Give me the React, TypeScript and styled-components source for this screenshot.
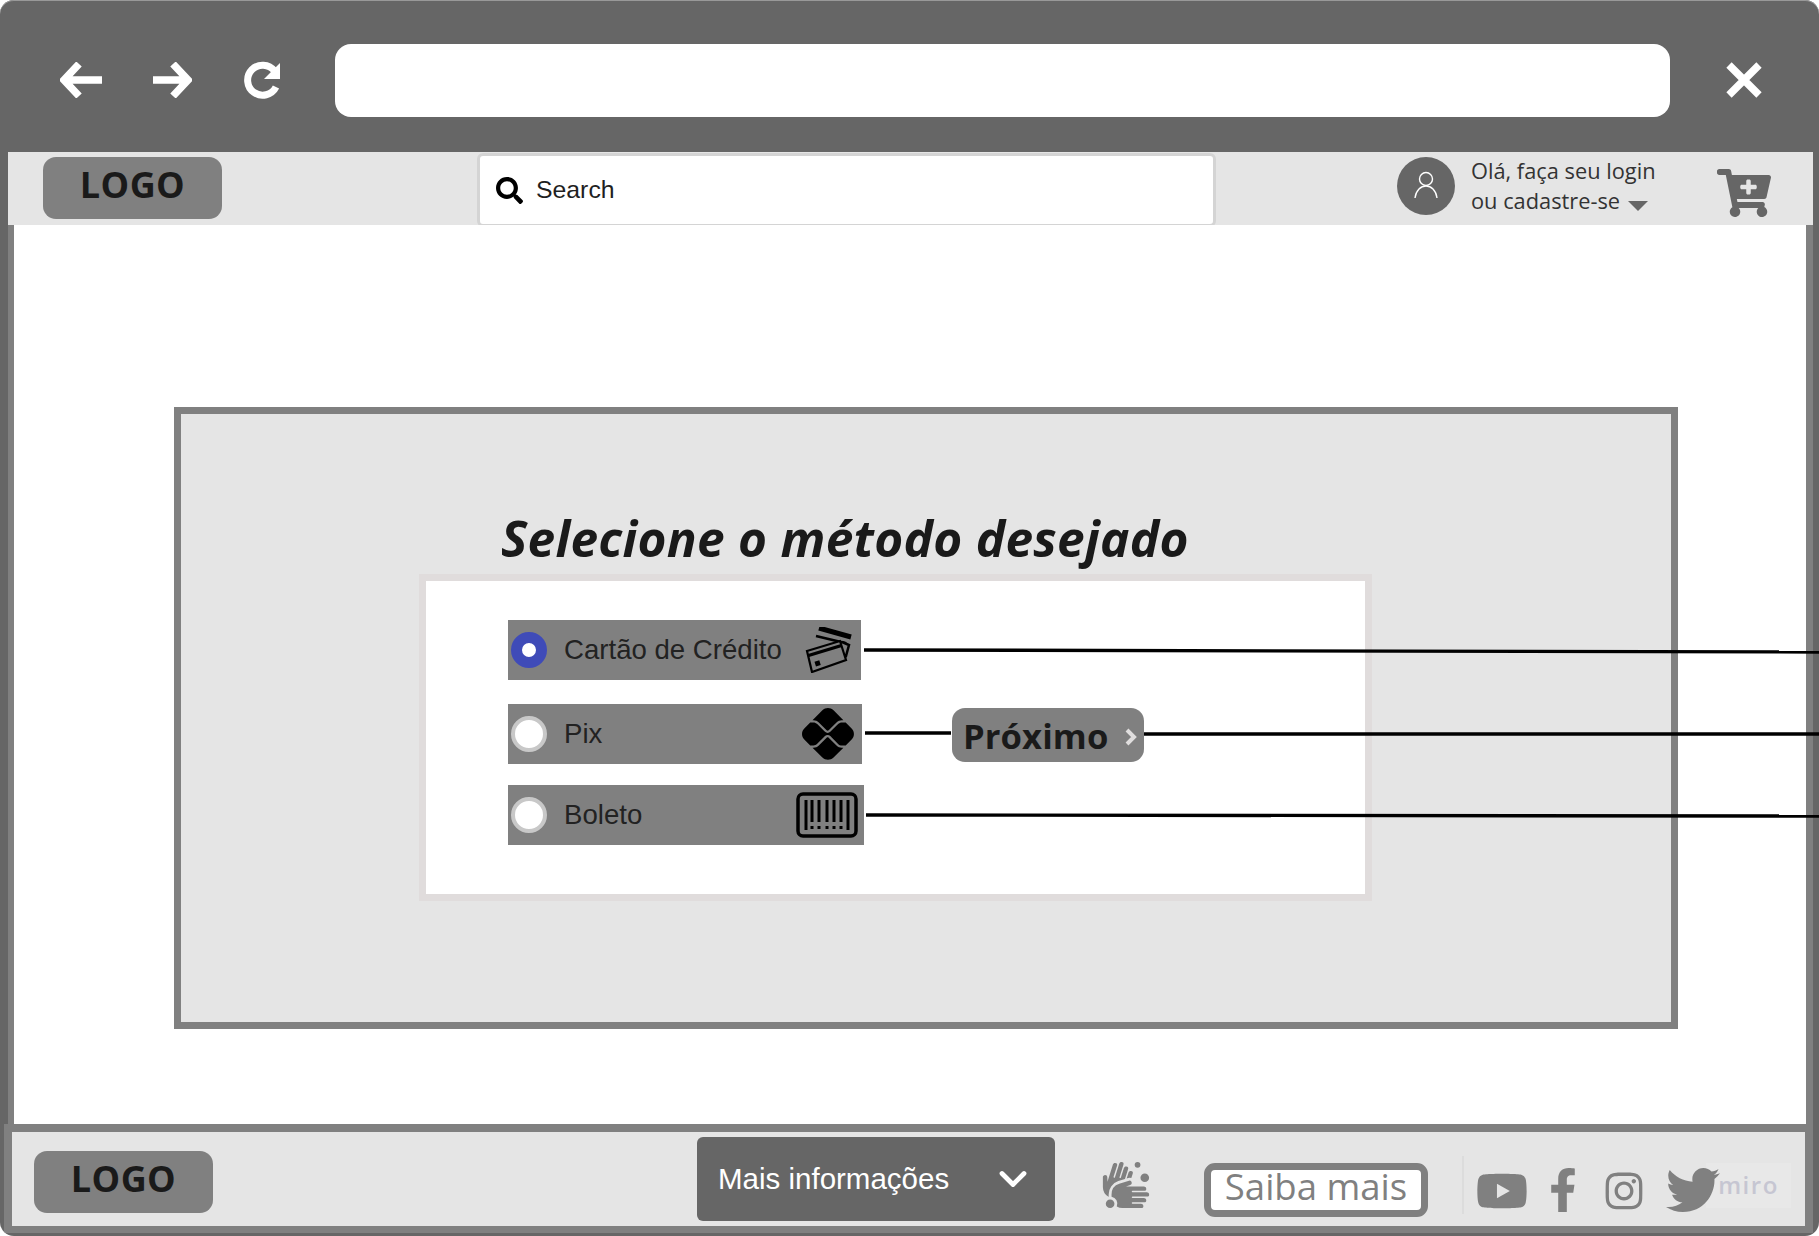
import type { FC, ReactNode } from "react";
import styled, { createGlobalStyle } from "styled-components";
import {
  FaCartPlus,
  FaFacebookF,
  FaHandsWash,
  FaInstagram,
  FaSearch,
  FaTwitter,
  FaYoutube,
} from "react-icons/fa";
import { FaPix } from "react-icons/fa6";
import { FiChevronDown } from "react-icons/fi";

const GlobalStyle = createGlobalStyle`
  html, body {
    margin: 0;
    padding: 0;
    background: #fff;
  }
  * {
    box-sizing: border-box;
  }
`;

const Window = styled.div`
  position: relative;
  width: 1819px;
  height: 1236px;
  display: flex;
  flex-direction: column;
  overflow: hidden;
  background: #666;
  border-radius: 14px;
  box-shadow: inset 0 1px 0 #999;
  font-family: "Open Sans", "Liberation Sans", sans-serif;
`;

const TopBar = styled.div`
  flex: none;
  height: 152px;
  display: flex;
  align-items: center;
  padding: 8px 59px 0 60px;
`;

const NavIcon = styled.svg<{ $gap: number }>`
  flex: none;
  margin-right: ${(p) => p.$gap}px;
  fill: none;
  stroke: #fff;
`;

const AddressBar = styled.div`
  flex: none;
  width: 1335px;
  height: 73px;
  margin: 0 56px 0 0;
  background: #fff;
  border-radius: 16px;
`;

const Inner = styled.div`
  flex: 1;
  min-height: 0;
  display: flex;
  flex-direction: column;
  margin: 0 6px 3px 4px;
`;

const Header = styled.header`
  flex: none;
  height: 73px;
  margin-left: 4px;
  display: flex;
  align-items: flex-start;
  background: #e5e5e5;
  padding: 5px 0 0 35px;
`;

const Logo = styled.div<{ $lift: number; $top?: number }>`
  flex: none;
  width: 179px;
  height: 62px;
  margin-top: ${(p) => p.$top ?? 0}px;
  display: flex;
  align-items: center;
  justify-content: center;
  background: #808080;
  border-radius: 13px;
  color: #1a1a1a;
  font-size: 36px;
  font-weight: 700;
  letter-spacing: 0.4px;
  padding-bottom: ${(p) => p.$lift}px;
`;

const SearchBox = styled.div`
  flex: none;
  width: 739px;
  height: 74px;
  margin: -4px 181px 0 255px;
  display: flex;
  align-items: center;
  gap: 13px;
  padding: 0 0 0 16px;
  background: #fff;
  border: 3px solid #d4d4d4;
  border-radius: 6px;
  font-family: "Liberation Sans", Arial, sans-serif;
  font-size: 24.8px;
  color: #1f1f1f;
`;

const Avatar = styled.div`
  flex: none;
  width: 58px;
  height: 58px;
  margin-right: 16px;
  display: flex;
  align-items: center;
  justify-content: center;
  border-radius: 50%;
  background: #666;
`;

const LoginText = styled.div`
  flex: none;
  width: 246px;
  margin-top: -1px;
  color: #333;
  font-size: 21.8px;
  line-height: 30px;
`;

const Caret = styled.span`
  display: inline-block;
  width: 0;
  height: 0;
  margin-left: 8px;
  border-left: 10px solid transparent;
  border-right: 10px solid transparent;
  border-top: 10px solid #666;
  vertical-align: -2px;
`;

const CartButton = styled.div`
  flex: none;
  margin-top: 9px;
  color: #666;
  display: flex;
`;

const Main = styled.main`
  flex: 1;
  min-height: 0;
  margin-left: 4px;
  padding: 182px 0 0 160px;
  background: #fff;
  border-left: 6px solid #808080;
  border-right: 7px solid #808080;
`;

const Panel = styled.section`
  width: 1504px;
  height: 622px;
  padding: 91px 0 0 320px;
  background: #e5e5e5;
  border: 7px solid #808080;
`;

const Title = styled.h1`
  margin: 0;
  height: 69px;
  color: #1a1a1a;
  font-size: 49.6px;
  font-style: italic;
  font-weight: 700;
  letter-spacing: 0.27px;
  line-height: 66px;
  white-space: nowrap;
`;

const Card = styled.div`
  width: 953px;
  height: 327px;
  margin-left: -82px;
  padding: 39px 0 0 82px;
  display: flex;
  align-items: flex-start;
  background: #fff;
  border: 7px solid #e0dcdc;
`;

const Methods = styled.div`
  flex: none;
  width: 356px;
  display: flex;
  flex-direction: column;
  align-items: flex-start;
`;

const MethodRow = styled.label<{ $width: number; $top: number }>`
  width: ${(p) => p.$width}px;
  height: 60px;
  margin-top: ${(p) => p.$top}px;
  display: flex;
  align-items: center;
  padding: 0 6px 0 3px;
  background: #808080;
  color: #222;
  font-family: "Liberation Sans", Arial, sans-serif;
  font-size: 27.6px;
`;

const Radio = styled.span<{ $checked?: boolean }>`
  flex: none;
  width: 36px;
  height: 36px;
  margin-right: 17px;
  border-radius: 50%;
  background: #fff;
  border: ${(p) => (p.$checked ? "11px solid #3f4bb8" : "4px solid #c8c8c8")};
`;

const MethodLabel = styled.span`
  flex: 1;
`;

const MethodIcon = styled.span<{ $shift: number }>`
  flex: none;
  display: flex;
  color: #000;
  margin-right: ${(p) => p.$shift}px;
`;

const NextButton = styled.button`
  flex: none;
  width: 192px;
  height: 54px;
  margin: 88px 0 0 88px;
  padding: 0 7px 0 11px;
  display: flex;
  align-items: center;
  justify-content: space-between;
  background: #808080;
  border: none;
  border-radius: 13px;
  color: #1a1a1a;
  font-family: "Open Sans", sans-serif;
  font-size: 34.6px;
  font-weight: 700;
  letter-spacing: 0.1px;
  position: relative;
  z-index: 1;
`;

const NextArrow = styled.svg`
  flex: none;
  margin-top: 4px;
  fill: none;
  stroke: #e0dede;
  stroke-width: 4;
`;

const Footer = styled.footer`
  flex: none;
  height: 109px;
  padding: 0 0 0 22px;
  display: flex;
  align-items: center;
  background: #e5e5e5;
  border: 8px solid #808080;
  border-bottom-width: 7px;
  color: #808080;
`;

const InfoButton = styled.div`
  flex: none;
  width: 358px;
  height: 84px;
  margin: -1px 45px 0 484px;
  padding: 0 20px 0 21px;
  display: flex;
  align-items: center;
  justify-content: space-between;
  background: #666;
  border-radius: 6px;
  color: #fff;
  font-family: "Liberation Sans", Arial, sans-serif;
  font-size: 29.5px;
`;

const HelpButton = styled.div`
  flex: none;
  width: 224px;
  height: 54px;
  margin: 21px 35px 0 52px;
  display: flex;
  align-items: center;
  justify-content: center;
  background: #fff;
  border: 7px solid #808080;
  border-radius: 11px;
  font-size: 36.5px;
  padding-bottom: 7px;
`;

const Divider = styled.div`
  flex: none;
  width: 2px;
  height: 58px;
  margin: 12px 12px 0 -1px;
  background: #dcdcdc;
`;

const Social = styled.span<{ $gap: number; $top: number }>`
  position: relative;
  z-index: 2;
  flex: none;
  display: flex;
  margin-right: ${(p) => p.$gap}px;
  margin-top: ${(p) => p.$top}px;
`;

const MiroBadge = styled.div`
  position: absolute;
  z-index: 1;
  left: 1706px;
  top: 1163px;
  width: 85px;
  height: 45px;
  display: flex;
  align-items: center;
  justify-content: center;
  background: rgba(235, 235, 235, 0.55);
  color: #c6c6d2;
  font-size: 24px;
  font-weight: 600;
  letter-spacing: 1.5px;
  padding-bottom: 3px;
`;

const Wires = styled.svg`
  position: absolute;
  left: 0;
  top: 0;
  stroke: #000;
  stroke-width: 3.4;
  pointer-events: none;
`;

const CardsIcon: FC = () => (
  <svg width="48" height="46" viewBox="0 0 48 46" fill="none" stroke="#000" strokeWidth="2">
    <path d="M15 1 L47 10" strokeWidth="5" />
    <path d="M12 9 L41 16 L39 23" strokeWidth="2.5" />
    <path d="M38 15 L45 18 L42 29 L37 28" strokeWidth="2.5" fill="#808080" />
    <path d="M3 24 L36 14 L42 33 L8 45 Z" fill="#808080" strokeWidth="2.2" />
    <path d="M4 27 L37 17 L38 20 L5 30 Z" fill="#000" stroke="none" />
    <rect x="11" y="34" width="5" height="5" fill="#000" stroke="none" transform="rotate(-17 13 36)" />
  </svg>
);

const BarcodeIcon: FC = () => (
  <svg width="62" height="46" viewBox="0 0 62 46" fill="none" stroke="#000">
    <rect x="2" y="2" width="58" height="42" rx="5" strokeWidth="3.5" />
    <path d="M10 8V38M16 8V30M23 8V30M31 8V30M38 8V30M45 8V30M52 8V38" strokeWidth="3" />
    <path d="M16 34V37M23 34V37M31 34V37M38 34V37M45 34V37" strokeWidth="3" />
  </svg>
);

const methods: { label: string; width: number; top: number; shift: number; checked?: boolean; icon: ReactNode }[] = [
  { label: "Cartão de Crédito", width: 353, top: 0, shift: 3, checked: true, icon: <CardsIcon /> },
  { label: "Pix", width: 354, top: 24, shift: 2, icon: <FaPix size={52} /> },
  { label: "Boleto", width: 356, top: 21, shift: 0, icon: <BarcodeIcon /> },
];

export default function App() {
  return (
    <>
      <GlobalStyle />
      <Window>
        <TopBar>
          <NavIcon $gap={51} width="42" height="36" viewBox="0 0 42 36" strokeWidth="7.5">
            <path d="M42 18H5M19 2L4 18L19 34" />
          </NavIcon>
          <NavIcon $gap={52} width="39" height="36" viewBox="0 0 39 36" strokeWidth="7.5">
            <path d="M0 18H34M20 2L35 18L20 34" />
          </NavIcon>
          <NavIcon $gap={55} width="36" height="38" viewBox="0 0 36 38" strokeWidth="7">
            <path d="M30.5 10A15 15 0 1 0 32 26" />
            <path d="M36 2V18H20Z" fill="#fff" stroke="none" />
          </NavIcon>
          <AddressBar />
          <NavIcon $gap={0} width="36" height="36" viewBox="0 0 36 36" strokeWidth="7.5">
            <path d="M3 3L33 33M33 3L3 33" />
          </NavIcon>
        </TopBar>
        <Inner>
          <Header>
            <Logo $lift={8}>LOGO</Logo>
            <SearchBox>
              <FaSearch size={27} color="#000" />
              Search
            </SearchBox>
            <Avatar>
              <svg width="26" height="30" viewBox="0 0 26 30" fill="none" stroke="#fff" strokeWidth="1.4">
                <circle cx="13" cy="8" r="6.5" />
                <path d="M2 27C3 19 8 15 13 15S23 19 24 27" />
              </svg>
            </Avatar>
            <LoginText>
              Olá, faça seu login
              <br />
              ou cadastre-se
              <Caret />
            </LoginText>
            <CartButton>
              <FaCartPlus size={54} />
            </CartButton>
          </Header>
          <Main>
            <Panel>
              <Title>Selecione o método desejado</Title>
              <Card>
                <Methods>
                  {methods.map((m) => (
                    <MethodRow key={m.label} $width={m.width} $top={m.top}>
                      <Radio $checked={m.checked} />
                      <MethodLabel>{m.label}</MethodLabel>
                      <MethodIcon $shift={m.shift}>{m.icon}</MethodIcon>
                    </MethodRow>
                  ))}
                </Methods>
                <NextButton>
                  Próximo
                  <NextArrow width="12" height="18" viewBox="0 0 12 18">
                    <path d="M2 2L9 9L2 16" />
                  </NextArrow>
                </NextButton>
              </Card>
            </Panel>
          </Main>
          <Footer>
            <Logo $lift={7} $top={5}>LOGO</Logo>
            <InfoButton>
              Mais informações
              <FiChevronDown size={44} strokeWidth={2.6} />
            </InfoButton>
            <Social $gap={0} $top={12}>
              <FaHandsWash size={52} />
            </Social>
            <HelpButton>Saiba mais</HelpButton>
            <Divider />
            <Social $gap={13} $top={24}>
              <FaYoutube size={52} />
            </Social>
            <Social $gap={18} $top={22}>
              <FaFacebookF size={44} />
            </Social>
            <Social $gap={21} $top={24}>
              <FaInstagram size={42} />
            </Social>
            <Social $gap={0} $top={22}>
              <FaTwitter size={54} />
            </Social>
          </Footer>
        </Inner>
        <MiroBadge>miro</MiroBadge>
        <Wires width="1819" height="1236">
          <path d="M864 650L1819 652" />
          <path d="M865 733H951" />
          <path d="M1143 734L1819 734" />
          <path d="M866 815L1819 816" />
        </Wires>
      </Window>
    </>
  );
}
